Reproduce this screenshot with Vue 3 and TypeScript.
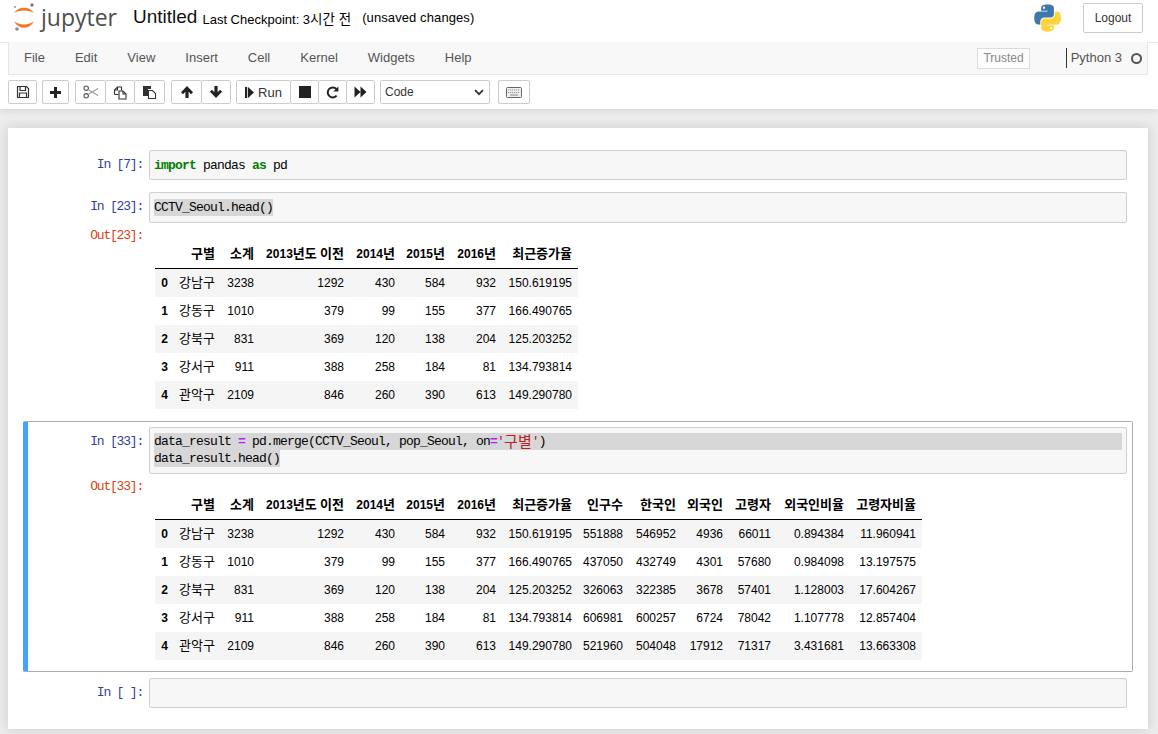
<script setup lang="ts">
const menus: string[] = ['File', 'Edit', 'View', 'Insert', 'Cell', 'Kernel', 'Widgets', 'Help']

const baseCols = [
  { label: '구별', w: 47 },
  { label: '소계', w: 39 },
  { label: '2013년도 이전', w: 90 },
  { label: '2014년', w: 51 },
  { label: '2015년', w: 50 },
  { label: '2016년', w: 51 },
  { label: '최근증가율', w: 76 }
]
const extraCols = [
  { label: '인구수', w: 51 },
  { label: '한국인', w: 53 },
  { label: '외국인', w: 47 },
  { label: '고령자', w: 48 },
  { label: '외국인비율', w: 73 },
  { label: '고령자비율', w: 72 }
]
const baseRows: string[][] = [
  ['강남구', '3238', '1292', '430', '584', '932', '150.619195'],
  ['강동구', '1010', '379', '99', '155', '377', '166.490765'],
  ['강북구', '831', '369', '120', '138', '204', '125.203252'],
  ['강서구', '911', '388', '258', '184', '81', '134.793814'],
  ['관악구', '2109', '846', '260', '390', '613', '149.290780']
]
const extraRows: string[][] = [
  ['551888', '546952', '4936', '66011', '0.894384', '11.960941'],
  ['437050', '432749', '4301', '57680', '0.984098', '13.197575'],
  ['326063', '322385', '3678', '57401', '1.128003', '17.604267'],
  ['606981', '600257', '6724', '78042', '1.107778', '12.857404'],
  ['521960', '504048', '17912', '71317', '3.431681', '13.663308']
]
const mergedCols = [...baseCols, ...extraCols]
const mergedRows = baseRows.map((r, i) => [...r, ...extraRows[i]])
const widthOf = (cols: { w: number }[]) => cols.reduce((s, c) => s + c.w, 19)
const runs = (s: string) =>
  s.split(/([가-힣]+)/).filter(Boolean).map((t) => ({ t, ko: /[가-힣]/.test(t) }))
</script>

<template>
  <div class="page">
    <header class="site-header">
      <div class="top-row">
        <div class="logo">
          <svg class="logo-mark" width="22" height="30" viewBox="0 0 22 30">
            <path d="M1 10C5 3 17 3 21 10C17 6.5 5 6.5 1 10Z" fill="#f37726" />
            <path d="M1 18C5 27 17 27 21 18C17 22.5 5 22.5 1 18Z" fill="#f37726" />
            <circle cx="19" cy="2" r="1.7" fill="#767677" />
            <circle cx="2" cy="4" r="1.1" fill="#9e9e9e" />
            <circle cx="4" cy="26" r="1.8" fill="#8a8a8a" />
          </svg>
          <span class="logo-text">jupyter</span>
        </div>
        <span class="title">Untitled</span>
        <span class="checkpoint">Last Checkpoint: 3<span class="ko-head">시간 전</span></span>
        <span class="autosave">(unsaved changes)</span>
        <span class="spring"></span>
        <svg class="py-logo" width="27" height="28" viewBox="0 0 110 110">
          <path fill="#3c78aa" d="M54.9 0c-4.6 0-9 .4-12.8 1.1C30.8 3.1 28.8 7.2 28.8 14.9v10.1h26.2v3.4H18.9c-7.6 0-14.3 4.6-16.3 13.3-2.4 10-2.5 16.2 0 26.6 1.9 7.8 6.3 13.3 13.9 13.3h9v-12c0-8.7 7.5-16.3 16.4-16.3h26.2c7.3 0 13.1-6 13.1-13.3V14.9c0-7.1-6-12.4-13.1-13.6C63.4.3 59.5 0 54.9 0zM40.7 8.1c2.7 0 4.9 2.2 4.9 5 0 2.7-2.2 4.9-4.9 4.9-2.7 0-4.9-2.2-4.9-4.9 0-2.8 2.2-5 4.9-5z" />
          <path fill="#fdd340" d="M85 28.7v11.7c0 9-7.7 16.6-16.4 16.6H42.4c-7.2 0-13.1 6.1-13.1 13.3v25c0 7.1 6.2 11.3 13.1 13.3 8.3 2.4 16.3 2.9 26.2 0 6.6-1.9 13.1-5.8 13.1-13.3v-10H55.5v-3.3h39.3c7.6 0 10.5-5.3 13.1-13.3 2.7-8.2 2.6-16.1 0-26.6-1.9-7.6-5.4-13.3-13.1-13.3H85zM70.3 92c2.7 0 4.9 2.2 4.9 4.9 0 2.8-2.2 5-4.9 5-2.7 0-4.9-2.2-4.9-5 0-2.7 2.2-4.9 4.9-4.9z" />
        </svg>
        <button class="logout">Logout</button>
      </div>

      <nav class="menubar">
        <span v-for="m in menus" :key="m" class="menu-item">{{ m }}</span>
        <span class="spring"></span>
        <span class="trusted">Trusted</span>
        <span class="kernel">Python 3</span>
        <span class="kernel-dot"></span>
      </nav>

      <div class="toolbar">
        <div class="group">
          <button class="tb w29">
            <svg width="14" height="14" viewBox="0 0 14 14" fill="none" stroke="#333" stroke-width="1.2"><path d="M1.5 1.5h9l2 2v9h-11z" /><path d="M4 1.5v4h5.5v-4M3.5 12.5v-4.5h7v4.5" /></svg>
          </button>
        </div>
        <div class="group g5">
          <button class="tb w27">
            <svg width="13" height="13" viewBox="0 0 13 13"><path d="M5 1h3v4h4v3H8v4H5V8H1V5h4z" fill="#222" /></svg>
          </button>
        </div>
        <div class="group g6">
          <button class="tb w31">
            <svg width="16" height="14" viewBox="0 0 16 14" fill="none" stroke="#555" stroke-width="1.1"><circle cx="3.2" cy="3.2" r="2.2" /><circle cx="3.2" cy="10.8" r="2.2" /><path d="M5 4.5L15 10.5M5 9.5L15 3.5" stroke="#999" /></svg>
          </button>
          <button class="tb w30">
            <svg width="15" height="15" viewBox="0 0 15 15" fill="none" stroke="#333" stroke-width="1.1"><path d="M1.5 9.5V5l3-3h4v3.5M1.5 9.5h4" /><path d="M4.5 2v3h-3" /><path d="M6 6h4l3 3v5H6z" fill="#fff" /><path d="M10 6v3h3" /></svg>
          </button>
          <button class="tb w31">
            <svg width="15" height="15" viewBox="0 0 15 15"><path d="M1 1h8v3H6v7H1z" fill="#333" /><path d="M6.5 5.5h4l3 3v5h-7z" fill="#fff" stroke="#333" stroke-width="1.1" /></svg>
          </button>
        </div>
        <div class="group g6">
          <button class="tb w31">
            <svg width="14" height="14" viewBox="0 0 14 14"><path d="M7 1L13 7.3 11 9.2 8.6 6.7V13H5.4V6.7L3 9.2 1 7.3z" fill="#222" /></svg>
          </button>
          <button class="tb w30">
            <svg width="14" height="14" viewBox="0 0 14 14"><path d="M7 13L13 6.7 11 4.8 8.6 7.3V1H5.4V7.3L3 4.8 1 6.7z" fill="#222" /></svg>
          </button>
        </div>
        <div class="group g5">
          <button class="tb run">
            <svg width="9" height="11" viewBox="0 0 9 11"><path d="M0 0h2.2v11H0zM3 0L9 5.5 3 11z" fill="#222" /></svg>
            <span>Run</span>
          </button>
          <button class="tb w29">
            <svg width="12" height="12" viewBox="0 0 12 12"><rect width="12" height="12" fill="#222" /></svg>
          </button>
          <button class="tb w29">
            <svg width="13" height="13" viewBox="0 0 13 13" fill="none"><path d="M10.6 9.6A5 5 0 1 1 10.4 3" stroke="#222" stroke-width="2" /><path d="M12.4 0.6v5h-5z" fill="#222" /></svg>
          </button>
          <button class="tb w29">
            <svg width="13" height="12" viewBox="0 0 13 12"><path d="M0.5 0.5L6.5 6 0.5 11.5zM6.5 0.5L12.5 6 6.5 11.5z" fill="#222" /></svg>
          </button>
        </div>
        <div class="select">
          <span>Code</span>
          <svg width="10" height="7" viewBox="0 0 10 7" fill="none"><path d="M1 1.2L5 5.2 9 1.2" stroke="#333" stroke-width="1.8" /></svg>
        </div>
        <div class="group g8">
          <button class="tb w32">
            <svg width="16" height="11" viewBox="0 0 16 11"><rect x="0.5" y="0.5" width="15" height="10" rx="1" fill="#eee" stroke="#666" /><path d="M2 3h12M2 5.5h12" stroke="#999" stroke-dasharray="1.2 .8" /><path d="M4 8h8" stroke="#888" /></svg>
          </button>
        </div>
      </div>
    </header>

    <main class="notebook">
      <section class="cell">
        <div class="in-row">
          <div class="prompt in">In [7]:</div>
          <div class="input"><div class="line"><span class="kw">import</span> pandas <span class="kw">as</span> pd</div></div>
        </div>
      </section>

      <section class="cell">
        <div class="in-row">
          <div class="prompt in">In [23]:</div>
          <div class="input"><div class="line"><span class="sel">CCTV_Seoul.head()</span></div></div>
        </div>
        <div class="out-row">
          <div class="prompt out">Out[23]:</div>
          <div class="output">
            <table class="df" :style="{ width: widthOf(baseCols) + 'px' }">
              <colgroup>
                <col style="width: 19px" />
                <col v-for="c in baseCols" :key="c.label" :style="{ width: c.w + 'px' }" />
              </colgroup>
              <thead>
                <tr>
                  <th></th>
                  <th v-for="c in baseCols" :key="c.label"><span v-for="(r, k) in runs(c.label)" :key="k" :class="{ ko: r.ko }">{{ r.t }}</span></th>
                </tr>
              </thead>
              <tbody>
                <tr v-for="(row, i) in baseRows" :key="i">
                  <th class="idx">{{ i }}</th>
                  <td v-for="(v, j) in row" :key="j"><span v-for="(r, k) in runs(v)" :key="k" :class="{ ko: r.ko }">{{ r.t }}</span></td>
                </tr>
              </tbody>
            </table>
          </div>
        </div>
      </section>

      <section class="cell selected">
        <div class="in-row">
          <div class="prompt in">In [33]:</div>
          <div class="input">
            <div class="line full">data_result <span class="op">=</span> pd.merge(CCTV_Seoul, pop_Seoul, on<span class="op">=</span><span class="str">'<span class="ko-code">구별</span>'</span>)</div>
            <div class="line"><span class="sel">data_result.head()</span></div>
          </div>
        </div>
        <div class="out-row">
          <div class="prompt out">Out[33]:</div>
          <div class="output">
            <table class="df" :style="{ width: widthOf(mergedCols) + 'px' }">
              <colgroup>
                <col style="width: 19px" />
                <col v-for="c in mergedCols" :key="c.label" :style="{ width: c.w + 'px' }" />
              </colgroup>
              <thead>
                <tr>
                  <th></th>
                  <th v-for="c in mergedCols" :key="c.label"><span v-for="(r, k) in runs(c.label)" :key="k" :class="{ ko: r.ko }">{{ r.t }}</span></th>
                </tr>
              </thead>
              <tbody>
                <tr v-for="(row, i) in mergedRows" :key="i">
                  <th class="idx">{{ i }}</th>
                  <td v-for="(v, j) in row" :key="j"><span v-for="(r, k) in runs(v)" :key="k" :class="{ ko: r.ko }">{{ r.t }}</span></td>
                </tr>
              </tbody>
            </table>
          </div>
        </div>
      </section>

      <section class="cell">
        <div class="in-row">
          <div class="prompt in">In [ ]:</div>
          <div class="input"><div class="line"></div></div>
        </div>
      </section>
    </main>
  </div>
</template>

<style>
html, body { margin: 0; padding: 0; background: #eeeeee; overflow: hidden; }
</style>

<style scoped>
.page {
  width: 1158px;
  height: 734px;
  overflow: hidden;
  background: #eeeeee;
  font-family: "Liberation Sans", "Noto Sans CJK KR", sans-serif;
  color: #000;
}
.spring { flex: 1; }

.site-header {
  height: 109px;
  box-sizing: border-box;
  background: #fff;
  box-shadow: 0 0 8px rgba(87, 87, 87, 0.25);
  position: relative;
}
.top-row {
  height: 43px;
  box-sizing: border-box;
  border-bottom: 1px solid #e7e7e7;
  display: flex;
  align-items: center;
  padding: 0 15px 0 13px;
}
.logo { display: flex; align-items: center; width: 120px; }
.logo-mark { flex: none; margin-top: -7px; }
.logo-text {
  font-family: "Open Sans", sans-serif;
  font-size: 23px;
  color: #4e4e4e;
  margin-left: 6px;
  letter-spacing: 0;
  line-height: 30px;
  margin-top: -9px;
}
.title { font-size: 19px; color: #111; margin-right: 5px; margin-top: -9px; }
.checkpoint { font-size: 13px; margin-right: 11px; margin-top: -7px; }
.ko-head { font-size: 13.5px; }
.autosave { font-size: 13px; margin-top: -7px; letter-spacing: 0.1px; }
.py-logo { margin-right: 22px; margin-top: -6px; }
.logout {
  width: 60px;
  height: 30px;
  margin-top: -7px;
  background: #fff;
  border: 1px solid #ccc;
  border-radius: 2px;
  font: 12px "Liberation Sans", sans-serif;
  color: #333;
  padding: 0;
}

.menubar {
  height: 33px;
  box-sizing: border-box;
  margin: -1px 10px 0 8px;
  background: #f8f8f8;
  border: 1px solid #e7e7e7;
  border-top: 0;
  display: flex;
  align-items: center;
  color: #555;
  font-size: 13px;
}
.menu-item { padding: 0 15px 2px; }
.trusted {
  height: 21px;
  line-height: 19px;
  box-sizing: border-box;
  border: 1px solid #ddd;
  padding: 0 5px;
  font-size: 12px;
  color: #888;
  margin-right: 36px;
  background: #fdfdfd;
}
.kernel {
  border-left: 1px solid #333;
  padding-left: 4px;
  height: 20px;
  line-height: 19px;
  color: #555;
}
.kernel-dot {
  width: 11px;
  height: 11px;
  box-sizing: border-box;
  border: 2px solid #555;
  border-radius: 50%;
  margin: 0 5px 0 9px;
}

.toolbar {
  display: flex;
  align-items: center;
  padding: 5px 0 0 8px;
  height: 24px;
}
.group { display: flex; }
.g5 { margin-left: 5px; }
.g6 { margin-left: 6px; }
.g8 { margin-left: 8px; }
.tb {
  height: 24px;
  box-sizing: border-box;
  background: #fff;
  border: 1px solid #ccc;
  border-radius: 2px;
  padding: 0;
  margin-left: -1px;
  display: flex;
  align-items: center;
  justify-content: center;
  font: 13px "Liberation Sans", sans-serif;
  color: #333;
}
.group .tb:first-child { margin-left: 0; }
.w27 { width: 27px; }
.w29 { width: 29px; }
.w30 { width: 30px; }
.w31 { width: 31px; }
.w32 { width: 32px; }
.run { width: 55px; gap: 4px; }
.select {
  width: 110px;
  height: 24px;
  box-sizing: border-box;
  margin-left: 5px;
  padding: 0 5px 0 4px;
  background: #fff;
  border: 1px solid #ccc;
  border-radius: 2px;
  display: flex;
  align-items: center;
  justify-content: space-between;
  font-size: 12px;
  color: #333;
}

.notebook {
  margin: 19px 10px 0 8px;
  padding: 16px 0 15px;
  background: #fff;
  box-shadow: 0 0 12px 1px rgba(87, 87, 87, 0.2);
}
.cell {
  margin: 0 15px;
  padding: 5px;
  border: 1px solid transparent;
  border-left-width: 5px;
  border-radius: 2px;
}
.cell.selected {
  border-color: #ababab;
  border-left-color: #42a5f5;
}
.in-row, .out-row { display: flex; }
.prompt {
  width: 116px;
  flex: none;
  box-sizing: border-box;
  padding-right: 6px;
  text-align: right;
  font-family: "Liberation Mono", monospace;
  font-size: 13px;
  letter-spacing: -1.2px;
  line-height: 14px;
}
.prompt.in { color: #303f9f; padding-top: 8px; }
.prompt.out { color: #d84315; padding-top: 1px; }
.out-row { margin-top: 5px; }
.input {
  flex: 1;
  box-sizing: border-box;
  border: 1px solid #cfcfcf;
  border-radius: 2px;
  background: #f7f7f7;
  padding: 5.7px 4px;
  font-family: "Liberation Mono", "Noto Sans CJK KR", monospace;
  font-size: 13px;
  letter-spacing: -0.8px;
  color: #000;
}
.line { height: 17px; line-height: 17px; white-space: pre; }
.line.full { background: #d7d7d7; }
.sel { background: #d7d7d7; display: inline-block; height: 17px; }
.kw { color: #008000; font-weight: bold; }
.op { color: #aa22ff; font-weight: bold; }
.str { color: #ba2121; }
.ko-code {
  display: inline-block;
  height: 17px;
  vertical-align: top;
  font-family: "Noto Sans CJK KR", sans-serif;
  font-size: 15px;
  letter-spacing: 0;
  line-height: 16px;
}
.output { padding: 12.8px 0 6px 6px; }

.df {
  table-layout: fixed;
  border-collapse: separate;
  border-spacing: 0;
  font-size: 12px;
  color: #000;
}
.df th, .df td {
  height: 28px;
  box-sizing: border-box;
  padding: 0 6px 0 0;
  text-align: right;
  white-space: nowrap;
  vertical-align: middle;
  font-weight: normal;
  line-height: 14px;
}
.df .ko { font-size: 13px; line-height: 14px; }
.df thead th {
  font-weight: bold;
  border-bottom: 1px solid #000;
}
.df .idx { font-weight: bold; }
.df tbody tr:nth-child(odd) { background: #f5f5f5; }
</style>
